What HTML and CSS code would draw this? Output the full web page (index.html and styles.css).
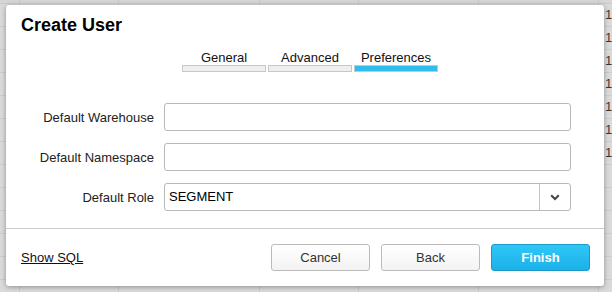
FILE: index.html
```html
<!DOCTYPE html>
<html>
<head>
<meta charset="utf-8">
<link rel="stylesheet" href="styles.css">
</head>
<body>
<div class="backdrop">
  <div class="bg-head">
    <div class="c c1"></div><div class="c c2"></div><div class="c c3"></div><div class="c c4"></div><div class="c c5"></div><div class="c c6"></div><div class="c c7"></div>
  </div>
  <div class="bg-row"><div class="c c1"></div><div class="c c2"></div><div class="c c3"></div><div class="c c4"></div><div class="c c5"></div><div class="c c6"></div><div class="c c7">1</div></div>
  <div class="bg-row"><div class="c c1"></div><div class="c c2"></div><div class="c c3"></div><div class="c c4"></div><div class="c c5"></div><div class="c c6"></div><div class="c c7">1</div></div>
  <div class="bg-row"><div class="c c1"></div><div class="c c2"></div><div class="c c3"></div><div class="c c4"></div><div class="c c5"></div><div class="c c6"></div><div class="c c7">1</div></div>
  <div class="bg-row"><div class="c c1"></div><div class="c c2"></div><div class="c c3"></div><div class="c c4"></div><div class="c c5"></div><div class="c c6"></div><div class="c c7">1</div></div>
  <div class="bg-row"><div class="c c1"></div><div class="c c2"></div><div class="c c3"></div><div class="c c4"></div><div class="c c5"></div><div class="c c6"></div><div class="c c7">1</div></div>
  <div class="bg-row"><div class="c c1"></div><div class="c c2"></div><div class="c c3"></div><div class="c c4"></div><div class="c c5"></div><div class="c c6"></div><div class="c c7">1</div></div>
  <div class="bg-row"><div class="c c1"></div><div class="c c2"></div><div class="c c3"></div><div class="c c4"></div><div class="c c5"></div><div class="c c6"></div><div class="c c7">1</div></div>
  <div class="bg-row"><div class="c c1"></div><div class="c c2"></div><div class="c c3"></div><div class="c c4"></div><div class="c c5"></div><div class="c c6"></div><div class="c c7"></div></div>
  <div class="bg-row"><div class="c c1"></div><div class="c c2"></div><div class="c c3"></div><div class="c c4"></div><div class="c c5"></div><div class="c c6"></div><div class="c c7"></div></div>
  <div class="bg-row"><div class="c c1"></div><div class="c c2"></div><div class="c c3"></div><div class="c c4"></div><div class="c c5"></div><div class="c c6"></div><div class="c c7"></div></div>
  <div class="bg-row"><div class="c c1"></div><div class="c c2"></div><div class="c c3"></div><div class="c c4"></div><div class="c c5"></div><div class="c c6"></div><div class="c c7"></div></div>
  <div class="bg-row"><div class="c c1"></div><div class="c c2"></div><div class="c c3"></div><div class="c c4"></div><div class="c c5"></div><div class="c c6"></div><div class="c c7"></div></div>
  <div class="bg-row"><div class="c c1"></div><div class="c c2"></div><div class="c c3"></div><div class="c c4"></div><div class="c c5"></div><div class="c c6"></div><div class="c c7"></div></div>
</div>

<div class="dialog">
  <div class="header">
    <h1 class="title">Create User</h1>
  </div>
  <div class="tabs">
    <div class="tab"><div class="tab-label">General</div><div class="tab-bar"></div></div>
    <div class="tab"><div class="tab-label">Advanced</div><div class="tab-bar"></div></div>
    <div class="tab active"><div class="tab-label">Preferences</div><div class="tab-bar"></div></div>
  </div>
  <div class="form">
    <div class="row">
      <label class="label">Default Warehouse</label>
      <div class="input"></div>
    </div>
    <div class="row">
      <label class="label">Default Namespace</label>
      <div class="input"></div>
    </div>
    <div class="row">
      <label class="label">Default Role</label>
      <div class="input select">
        <span class="select-value">SEGMENT</span>
        <span class="select-btn">
          <svg width="10" height="7" viewBox="0 0 10 7"><polyline points="1.2,1.3 5,5 8.8,1.3" fill="none" stroke="#444" stroke-width="2"/></svg>
        </span>
      </div>
    </div>
  </div>
  <div class="footer">
    <a class="show-sql">Show SQL</a>
    <div class="buttons">
      <button class="btn">Cancel</button>
      <button class="btn">Back</button>
      <button class="btn primary">Finish</button>
    </div>
  </div>
</div>
</body>
</html>
```

FILE: styles.css
```css
html, body {
  margin: 0;
  padding: 0;
}
body {
  width: 612px;
  height: 292px;
  overflow: hidden;
  position: relative;
  background: #dadada;
  font-family: "Liberation Sans", Arial, sans-serif;
}

/* backdrop table */
.backdrop {
  display: flex;
  flex-direction: column;
}
.bg-head {
  display: flex;
  height: 3px;
  border-bottom: 1px solid #cbcbcb;
  background: #d6d6d6;
}
.bg-row {
  display: flex;
  height: 22px;
  border-bottom: 1px solid #cdcdcd;
}
.c {
  border-right: 1px solid #c9c9c9;
  box-sizing: border-box;
  font-size: 13px;
  color: #3d3630;
  line-height: 22px;
  overflow: hidden;
  white-space: nowrap;
}
.c1 { width: 20px; flex: none; }
.c2 { width: 99px; flex: none; }
.c3 { width: 141px; flex: none; }
.c4 { width: 99px; flex: none; }
.c5 { width: 120px; flex: none; }
.c6 { width: 120px; flex: none; }
.c7 { width: 13px; flex: none; border-right: none; padding-left: 6px; }

/* dialog */
.dialog {
  position: absolute;
  left: 6px;
  top: 5px;
  width: 598px;
  height: 281px;
  background: #fff;
  border-radius: 3px;
  box-shadow: 0 1px 5px rgba(0, 0, 0, 0.35);
  display: flex;
  flex-direction: column;
}
.header {
  padding: 10px 15px 0;
}
.title {
  margin: 0;
  font-size: 18px;
  font-weight: bold;
  line-height: 21px;
  color: #000;
}

.tabs {
  display: flex;
  gap: 2px;
  padding-left: 176px;
  margin-top: 14px;
}
.tab {
  width: 84px;
  flex: none;
  display: flex;
  flex-direction: column;
  align-items: stretch;
}
.tab-label {
  font-size: 13px;
  line-height: 15px;
  color: #111;
  text-align: center;
  white-space: nowrap;
}
.tab-bar {
  height: 7px;
  box-sizing: border-box;
  border: 1px solid #c8c8c8;
  background: #efefef;
}
.tab.active .tab-bar {
  background: #30bdec;
}

.form {
  margin-top: 31px;
  display: flex;
  flex-direction: column;
  gap: 12px;
}
.row {
  display: flex;
  align-items: center;
  gap: 10px;
}
.label {
  width: 148px;
  text-align: right;
  font-size: 13px;
  color: #222;
}
.input {
  width: 407px;
  height: 28px;
  box-sizing: border-box;
  border: 1px solid #b9b9b9;
  border-radius: 3px;
  background: #fff;
}
.select {
  display: flex;
  align-items: stretch;
}
.select-value {
  flex: 1;
  font-size: 13px;
  color: #000;
  line-height: 26px;
  padding-left: 4px;
}
.select-btn {
  width: 30px;
  border-left: 1px solid #c4c4c4;
  display: flex;
  align-items: center;
  justify-content: center;
}

.footer {
  margin-top: 17px;
  border-top: 1px solid #cccccc;
  display: flex;
  align-items: center;
  justify-content: space-between;
  padding: 15px 14px 0 15px;
}
.show-sql {
  font-size: 13px;
  color: #111;
  text-decoration: underline;
}
.buttons {
  display: flex;
  gap: 11px;
}
.btn {
  width: 99px;
  height: 27px;
  box-sizing: border-box;
  border: 1px solid #bbbbbb;
  border-radius: 3px;
  background: linear-gradient(#ffffff, #f3f3f3);
  font-family: "Liberation Sans", Arial, sans-serif;
  font-size: 13px;
  color: #333;
  padding: 0;
}
.btn.primary {
  background: linear-gradient(#2fc7f7, #1cb0e8);
  border-color: #1a9acb;
  color: #fff;
  font-weight: bold;
}
```
